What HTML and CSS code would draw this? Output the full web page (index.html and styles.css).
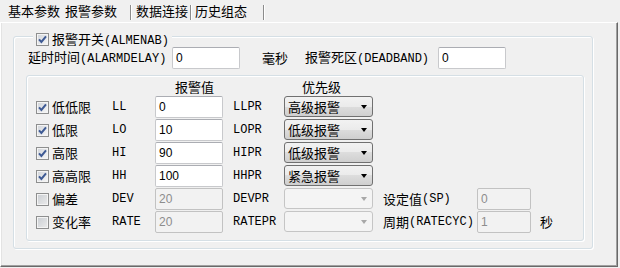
FILE: index.html
```html
<!DOCTYPE html>
<html lang="zh">
<head>
<meta charset="utf-8">
<link rel="stylesheet" href="styles.css">
</head>
<body>
<div class="tabs">
  <div class="tab t1">基本参数</div>
  <div class="tab t2">报警参数</div>
  <div class="sep"></div>
  <div class="tab t3">数据连接</div>
  <div class="sep"></div>
  <div class="tab t4">历史组态</div>
  <div class="sep"></div>
</div>
<div class="panel">
  <div class="group outer">
    <div class="group-title">
      <span class="cb"><svg viewBox="0 0 11 11" width="11" height="11"><path d="M2 5.3 4.4 8 9 2.3" fill="none" stroke="#3e5a94" stroke-width="2"/></svg></span>
      <span>报警开关<span class="en">(ALMENAB)</span></span>
    </div>
    <div class="delay-row">
      <span class="lbl-delay">延时时间<span class="en">(ALARMDELAY)</span></span>
      <div class="field w68">0</div>
      <span class="ms">毫秒</span>
      <span class="lbl-dead">报警死区<span class="en">(DEADBAND)</span></span>
      <div class="field w68">0</div>
    </div>
    <div class="group inner">
      <div class="grid">
        <div class="hdr h1">报警值</div>
        <div class="hdr h2">优先级</div>

        <div class="cell first chk"><span class="cb"><svg viewBox="0 0 11 11" width="11" height="11"><path d="M2 5.3 4.4 8 9 2.3" fill="none" stroke="#3e5a94" stroke-width="2"/></svg></span><span>低低限</span></div>
        <div class="cell en">LL</div>
        <div class="cell"><div class="field w68">0</div></div>
        <div class="cell en">LLPR</div>
        <div class="cell"><div class="sel">高级报警</div></div>

        <div class="cell first chk"><span class="cb"><svg viewBox="0 0 11 11" width="11" height="11"><path d="M2 5.3 4.4 8 9 2.3" fill="none" stroke="#3e5a94" stroke-width="2"/></svg></span><span>低限</span></div>
        <div class="cell en">LO</div>
        <div class="cell"><div class="field w68">10</div></div>
        <div class="cell en">LOPR</div>
        <div class="cell"><div class="sel">低级报警</div></div>

        <div class="cell first chk"><span class="cb"><svg viewBox="0 0 11 11" width="11" height="11"><path d="M2 5.3 4.4 8 9 2.3" fill="none" stroke="#3e5a94" stroke-width="2"/></svg></span><span>高限</span></div>
        <div class="cell en">HI</div>
        <div class="cell"><div class="field w68">90</div></div>
        <div class="cell en">HIPR</div>
        <div class="cell"><div class="sel">低级报警</div></div>

        <div class="cell first chk"><span class="cb"><svg viewBox="0 0 11 11" width="11" height="11"><path d="M2 5.3 4.4 8 9 2.3" fill="none" stroke="#3e5a94" stroke-width="2"/></svg></span><span>高高限</span></div>
        <div class="cell en">HH</div>
        <div class="cell"><div class="field w68">100</div></div>
        <div class="cell en">HHPR</div>
        <div class="cell"><div class="sel">紧急报警</div></div>

        <div class="cell first chk"><span class="cb off"></span><span>偏差</span></div>
        <div class="cell en">DEV</div>
        <div class="cell"><div class="field w68 dis">20</div></div>
        <div class="cell en">DEVPR</div>
        <div class="cell"><div class="sel dis"></div></div>
        <div class="cell">设定值<span class="en">(SP)</span></div>
        <div class="cell"><div class="field w54 dis">0</div></div>

        <div class="cell first chk"><span class="cb off"></span><span>变化率</span></div>
        <div class="cell en">RATE</div>
        <div class="cell"><div class="field w68 dis">20</div></div>
        <div class="cell en">RATEPR</div>
        <div class="cell"><div class="sel dis"></div></div>
        <div class="cell">周期<span class="en">(RATECYC)</span></div>
        <div class="cell"><div class="field w54 dis">1</div></div>
        <div class="cell">秒</div>
      </div>
    </div>
  </div>
</div>
</body>
</html>
```

FILE: styles.css
```css
* { box-sizing: border-box; }

body {
  margin: 0;
  width: 620px;
  height: 268px;
  overflow: hidden;
  background: #f0f0f0;
  color: #000;
  font-family: "Noto Sans CJK SC", sans-serif;
  font-size: 13px;
  line-height: 16px;
}

.en {
  font-family: "Liberation Mono", "Noto Sans CJK SC", monospace;
  font-size: 12px;
}

/* tabs */
.tabs {
  display: flex;
  align-items: flex-start;
  height: 22px;
  padding-top: 3px;
}
.tab { line-height: 16px; white-space: nowrap; }
.t1 { margin-left: 8px; width: 57px; }
.t2 { width: 65px; }
.t3 { width: 58px; padding-left: 4px; }
.t4 { width: 71px; padding-left: 3px; }
.sep {
  width: 2px;
  height: 15px;
  margin-top: 2px;
  border-left: 1px solid #8c8c8c;
  border-right: 1px solid #ffffff;
}

/* panel */
.panel {
  width: 618px;
  height: 245px;
  border: 1px solid;
  border-color: #ffffff #696969 #696969 #ffffff;
  box-shadow: inset -1px -1px 0 #a0a0a0, inset 1px 0 0 #e3e3e3;
  padding: 13px 0 0 12px;
}

.group {
  position: relative;
  border: 1px solid #d5dfe5;
  border-radius: 3px;
  box-shadow: inset 1px 1px 0 #ffffff, 1px 1px 0 #ffffff;
}

.outer {
  width: 580px;
  height: 213px;
  padding: 10px 0 0 12px;
}

.group-title {
  position: absolute;
  top: -4px;
  left: 19px;
  height: 13px;
  padding: 0 3px;
  display: flex;
  align-items: center;
  gap: 3px;
  background: #f0f0f0;
  line-height: 13px;
  white-space: nowrap;
}

.delay-row {
  display: flex;
  align-items: center;
  height: 22px;
  padding-left: 2px;
  white-space: nowrap;
}
.lbl-delay { width: 144px; }
.ms { margin-left: 22px; width: 26px; }
.lbl-dead { margin-left: 17px; width: 133px; }

.inner {
  width: 558px;
  height: 166px;
  margin-top: 6px;
  padding: 0 0 0 9px;
}

.grid {
  display: grid;
  grid-template-columns: 76px 43px 78px 51px 99px 94px 63px 30px;
  grid-template-rows: 20px repeat(6, 23px);
}

.hdr { padding-top: 3px; line-height: 16px; }
.h1 { grid-column: 3; padding-left: 20px; }
.h2 { grid-column: 5; padding-left: 18px; }

.cell {
  height: 22px;
  display: flex;
  align-items: center;
  white-space: nowrap;
}
.first { grid-column: 1; }
.chk { gap: 3px; }

/* checkbox */
.cb {
  flex: none;
  display: inline-block;
  width: 13px;
  height: 13px;
  border: 1px solid #8e8f8f;
  background: linear-gradient(135deg, #cfd3d9 0%, #f8f8f8 100%);
  box-shadow: inset 0 0 0 1px #f4f4f4;
}
.cb svg { display: block; }
.cb.off { background: linear-gradient(135deg, #c9cdd2 0%, #ececec 100%); }

/* text fields */
.field {
  height: 22px;
  border: 1px solid #c8c9cc;
  border-top-color: #abadb3;
  border-radius: 2px;
  background: #ffffff;
  padding-left: 3px;
  font-family: "Liberation Sans", sans-serif;
  font-size: 12px;
  line-height: 20px;
}
.w68 { width: 68px; }
.w54 { width: 54px; }
.field.dis {
  background: #f2f2f2;
  border-color: #c2c2c2;
  color: #8d8d8d;
}

/* combo boxes */
.sel {
  position: relative;
  align-self: flex-start;
  width: 89px;
  height: 21px;
  border: 1px solid #707070;
  border-radius: 3px;
  background: linear-gradient(#f2f2f2 0%, #ebebeb 50%, #dddddd 50%, #cfcfcf 100%);
  padding-left: 3px;
  line-height: 19px;
}
.sel::after {
  content: "";
  position: absolute;
  right: 5px;
  top: 8px;
  border-left: 3.5px solid transparent;
  border-right: 3.5px solid transparent;
  border-top: 4px solid #000;
}
.sel.dis {
  background: #f4f4f4;
  border-color: #c5c5c5;
}
.sel.dis::after { border-top-color: #a8a8a8; }
```
